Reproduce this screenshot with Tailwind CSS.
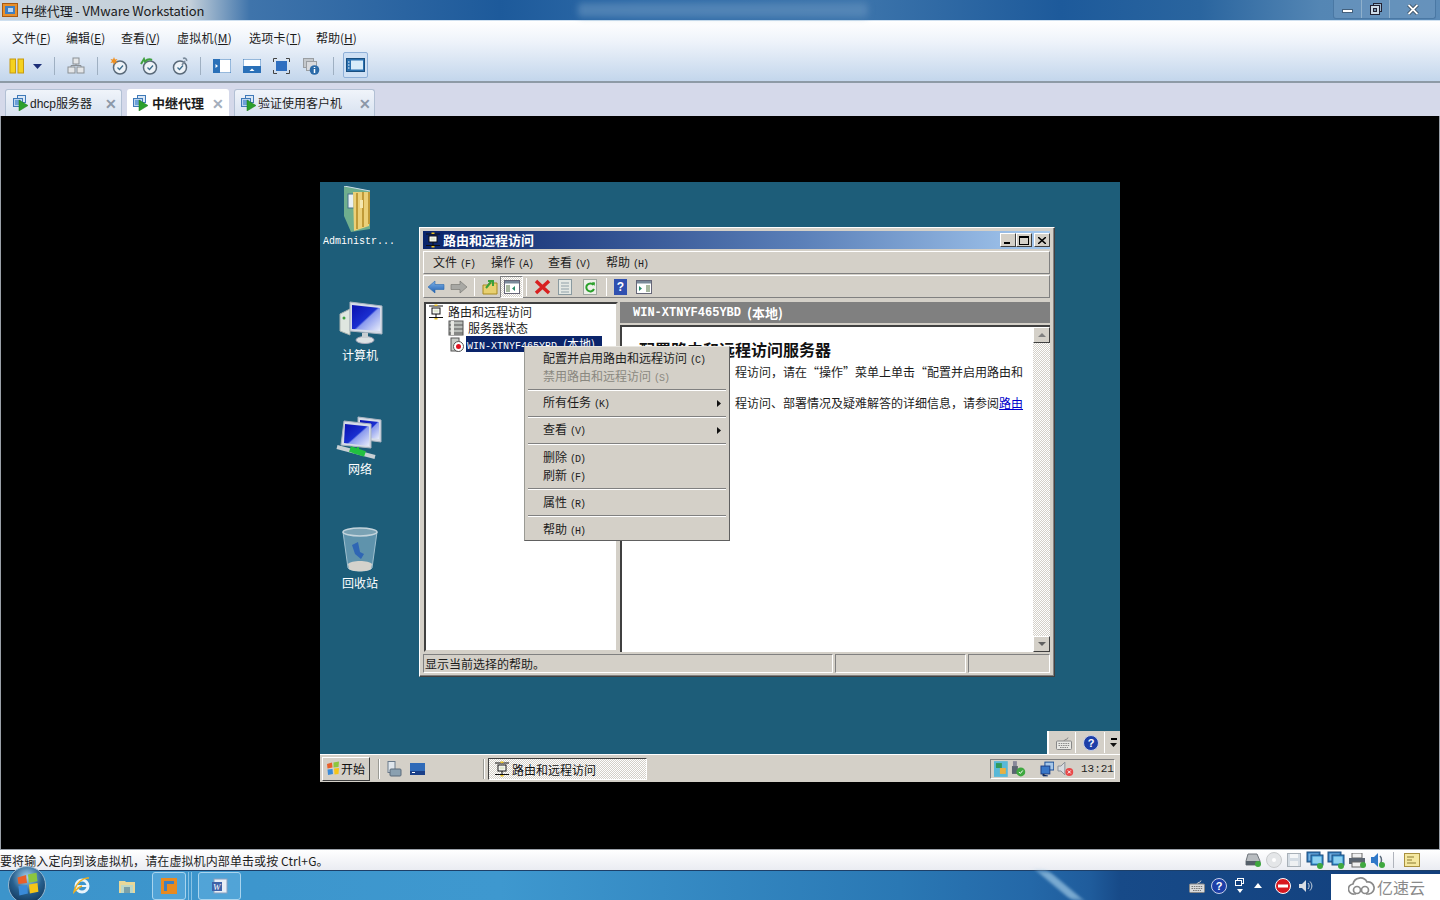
<!DOCTYPE html>
<html lang="zh"><head><meta charset="utf-8"><title>VMware Workstation</title>
<script src="https://cdn.jsdelivr.net/npm/@tailwindcss/browser@4"></script></head>
<body class="m-0 overflow-hidden bg-black">
<svg class="absolute w-0 h-0" aria-hidden="true"><defs>
<linearGradient id="scr" x1="0" y1="0" x2="1" y2="1"><stop offset="0" stop-color="#0a10b0"/><stop offset=".5" stop-color="#1a2fd0"/><stop offset=".55" stop-color="#8a9aee"/><stop offset="1" stop-color="#e8ecfa"/></linearGradient>
<linearGradient id="blu" x1="0" y1="0" x2="0" y2="1"><stop offset="0" stop-color="#7fb2e8"/><stop offset="1" stop-color="#1f5fb0"/></linearGradient>
<radialGradient id="orb" cx=".5" cy=".3" r=".8"><stop offset="0" stop-color="#a6d3ee"/><stop offset=".5" stop-color="#27608f"/><stop offset="1" stop-color="#0c2c4c"/></radialGradient>
<symbol id="tabvm" viewBox="0 0 16 16"><rect x="4.5" y=".5" width="8" height="7" fill="#dbe8f6" stroke="#3f79b8"/><rect x=".5" y="3.5" width="9" height="8" fill="#bcd5ee" stroke="#3f79b8"/><rect x="2" y="5" width="6" height="5" fill="#6ea1d8"/><path d="M6 5l9 5.5L6 16z" fill="#2ca02c" stroke="#1a7a1a" stroke-width=".5"/></symbol>
<symbol id="mmc" viewBox="0 0 16 16"><path d="M1 2h14M1 13.500h14" stroke="#111" stroke-width="1.200"/><rect x="4" y="4" width="8" height="6" fill="#fff" stroke="#111"/><rect x="5.500" y="5.500" width="5" height="3" fill="#dfe7d0"/><path d="M8 10v3" stroke="#111"/><path d="M6.500 0.500h3v1.500h-3zM6.500 14h3v1.500h-3z" fill="#e8c020"/></symbol>
<symbol id="clock" viewBox="0 0 18 18"><circle cx="10" cy="10.500" r="6.500" fill="#eef3f8" stroke="#5a6a7a" stroke-width="1.500"/><path d="M7.500 10.500l2 2 3.500-4" fill="none" stroke="#3f6f8f" stroke-width="1.300"/></symbol>
<symbol id="pc" viewBox="0 0 18 18"><rect x="1" y="1" width="13" height="10" fill="#2f78b8" stroke="#1f4f80"/><rect x="2.500" y="2.500" width="10" height="7" fill="#78b4e4"/><rect x="5" y="4" width="12" height="10" fill="#2f88c8" stroke="#1f4f80"/><rect x="6.500" y="5.500" width="9" height="7" fill="#8cd0f0"/><circle cx="14" cy="15" r="3" fill="#3fa83f"/></symbol>
<symbol id="ok" viewBox="0 0 6 6"><circle cx="3" cy="3" r="3" fill="#3fa83f"/></symbol>
</defs></svg>

<main class="w-[1440px] h-[900px] flex flex-col relative overflow-hidden font-['Noto_Sans_CJK_SC','Liberation_Sans',sans-serif] text-[12px] text-[#1c1c1c]">

<!-- title bar -->
<header class="h-[21px] shrink-0 flex items-center justify-between relative border-b border-[#cfe0f0] bg-[linear-gradient(90deg,#c9d4dc_0,#c4d0da_190px,#3f74ab_250px,#1d5a9b_500px,#2f6ba8_640px,#3c74ab_860px,#1d5a9b_1060px,#2a659f_1200px,#5486b4_1320px,#5c8bb7_1440px)]">
  <div class="flex items-center">
    <svg class="w-[16px] h-[16px] ml-[2px]" viewBox="0 0 16 16"><rect x=".5" y="1.500" width="15" height="13" fill="#e8902a" stroke="#a85a10"/><rect x="3" y="4" width="10" height="8" fill="#3f7fc0"/><rect x="6" y="6" width="5" height="4" fill="#bcd5ee"/></svg>
    <span class="ml-[3px] text-[13px] tracking-[-0.12px] leading-none text-[#1a1a1a] font-['Noto_Sans_CJK_SC','Noto_Sans',sans-serif]">中继代理 - VMware Workstation</span>
  </div>
  <div class="absolute left-[578px] top-[3px] w-[290px] h-[14px] rounded bg-[#5e8dbb]/70 blur-[3px]"></div>
  <div class="flex h-[19px] self-start mr-[4px] border border-t-0 border-[#4a78a4] rounded-b-[3px] bg-[#6b96be]/70">
    <div class="w-[28px] flex items-center justify-center border-r border-[#8fb0cc]"><div class="w-[11px] h-[4px] mt-[3px] bg-white border border-[#44607c]"></div></div>
    <div class="w-[28px] flex items-center justify-center border-r border-[#8fb0cc]"><svg class="w-[12px] h-[12px]" viewBox="0 0 12 12"><rect x="3.500" y=".5" width="8" height="8" fill="#9db8d0" stroke="#223"/><rect x=".5" y="2.500" width="9" height="9" fill="#cfdce8" stroke="#223"/><rect x="3.500" y="5.500" width="3" height="3" fill="#7c98b4" stroke="#223"/></svg></div>
    <div class="w-[45px] flex items-center justify-center"><svg class="w-[12px] h-[11px]" viewBox="0 0 12 11"><path d="M1.500 1l9 9M10.500 1l-9 9" stroke="#2c3e50" stroke-width="3.400"/><path d="M1.500 1l9 9M10.500 1l-9 9" stroke="#fff" stroke-width="1.800"/></svg></div>
  </div>
</header>

<!-- menu + toolbar -->
<section class="h-[62px] shrink-0 border-b-2 border-[#8d9aa6] bg-[linear-gradient(180deg,#ffffff_0%,#eef3fa_35%,#c3d6ec_100%)]">
  <nav class="h-[30px] pl-[12px] pt-[7px] flex leading-[20px] text-[12px]">
    <span class="w-[54px]">文件(<u>F</u>)</span><span class="w-[55px]">编辑(<u>E</u>)</span><span class="w-[56px]">查看(<u>V</u>)</span><span class="w-[72px] tracking-[0.2px]">虚拟机(<u>M</u>)</span><span class="w-[67px] tracking-[0.2px]">选项卡(<u>T</u>)</span><span>帮助(<u>H</u>)</span>
  </nav>
  <div class="h-[30px] flex items-center pl-[9px]">
    <svg class="w-[16px] h-[16px]" viewBox="0 0 16 16"><rect x="1" y="1" width="5.500" height="14" fill="#f5d21f" stroke="#c79a10"/><rect x="9" y="1" width="5.500" height="14" fill="#f5d21f" stroke="#c79a10"/></svg>
    <svg class="w-[9px] h-[5px] ml-[8px]" viewBox="0 0 9 5"><path d="M0 0h9L4.500 5z" fill="#1c2f78"/></svg>
    <div class="w-px h-[18px] bg-[#9fb0c2] ml-[12px]"></div>
    <svg class="w-[18px] h-[18px] ml-[12px]" viewBox="0 0 18 18"><g fill="#e4e6e8" stroke="#8a8f94"><rect x="6" y="1" width="6" height="6"/><rect x="1" y="10" width="7" height="6"/><rect x="10" y="10" width="7" height="6"/></g><path d="M9 7v2M4 10V8.500h10V10" fill="none" stroke="#8a8f94"/></svg>
    <div class="w-px h-[18px] bg-[#9fb0c2] ml-[12px]"></div>
    <div class="relative w-[18px] h-[18px] ml-[12px]"><svg class="w-[18px] h-[18px]" viewBox="0 0 18 18"><use href="#clock"/><path d="M4 0l1 2.500L7.500 2 6 4l1.500 2L5 5.500 4 8 3 5.500.5 6 2 4 .5 2 3 2.500z" fill="#f09020"/></svg></div>
    <svg class="w-[18px] h-[18px] ml-[12px]" viewBox="0 0 18 18"><use href="#clock"/><path d="M1 7l3-5 1 2.500C7 2.500 10 2 12 3" fill="none" stroke="#3fa03f" stroke-width="2"/></svg>
    <svg class="w-[18px] h-[18px] ml-[12px]" viewBox="0 0 18 18"><use href="#clock"/><path d="M12 8l3-4M13 1.500c2-1 4 .5 3.500 2.500" fill="none" stroke="#7a8a9a" stroke-width="1.600"/></svg>
    <div class="w-px h-[18px] bg-[#9fb0c2] ml-[12px]"></div>
    <svg class="w-[18px] h-[14px] ml-[12px]" viewBox="0 0 18 14"><rect width="18" height="14" fill="#fff" stroke="#2a70b8"/><rect width="7" height="14" fill="#2a70b8"/><path d="M2.500 5l2.500 2-2.500 2z" fill="#fff"/></svg>
    <svg class="w-[18px] h-[14px] ml-[12px]" viewBox="0 0 18 14"><rect width="18" height="14" fill="#fff" stroke="#2a70b8"/><rect y="7" width="18" height="7" fill="#2a70b8"/><path d="M6.500 12l2.500-2.500 2.500 2.500z" fill="#fff"/></svg>
    <svg class="w-[17px] h-[16px] ml-[12px]" viewBox="0 0 17 16"><rect x="3" y="3" width="11" height="10" fill="#2f6fc0"/><path d="M.5 4V.5H4M13 .5h3.500V4M.5 12v3.500H4M13 15.500h3.500V12" fill="none" stroke="#444"/></svg>
    <svg class="w-[17px] h-[17px] ml-[13px]" viewBox="0 0 17 17"><rect x=".5" y=".5" width="10" height="9" fill="#c4c8cc" stroke="#9a9ea2"/><rect x="3.500" y="3.500" width="10" height="9" fill="#d8dade" stroke="#9a9ea2"/><circle cx="11.500" cy="12" r="4.800" fill="#2a6aa8"/><path d="M11.500 9v1M11.500 11v4" stroke="#fff" stroke-width="1.500"/></svg>
    <div class="w-px h-[18px] bg-[#9fb0c2] ml-[13px]"></div>
    <div class="w-[25px] h-[26px] ml-[9px] -mt-[3px] flex items-center justify-center rounded-[2px] border border-[#8fb0d8] bg-[#cfe0f4]">
      <svg class="w-[19px] h-[14px]" viewBox="0 0 19 14"><rect x=".5" y=".5" width="18" height="13" fill="#2a70b0" stroke="#1a4f80"/><rect x="5" y="2.500" width="12" height="9" fill="#d8ecfa"/><path d="M2 4h1.500M2 7h1.500M2 10h1.500" stroke="#fff"/></svg>
    </div>
  </div>
</section>

<!-- tabs -->
<section class="h-[33px] shrink-0 bg-[#d5d9ea] flex items-end pl-[5px] gap-[5px]">
  <div class="w-[117px] h-[27px] flex items-center pl-[7px] rounded-t-[3px] border border-b-0 border-[#b2c0d4] bg-[linear-gradient(180deg,#f0f4fa,#d8e2f0)]">
    <svg class="w-[16px] h-[16px]"><use href="#tabvm"/></svg><span class="ml-[1px] text-[12px] w-[75px]"><span class="font-['Liberation_Sans',sans-serif]">dhcp</span>服务器</span><span class="text-[#8c98a8] text-[14px] font-bold leading-none">✕</span>
  </div>
  <div class="w-[102px] h-[27px] flex items-center pl-[6px] rounded-t-[3px] bg-white">
    <svg class="w-[16px] h-[16px]"><use href="#tabvm"/></svg><span class="ml-[3px] text-[13px] font-bold w-[60px]">中继代理</span><span class="text-[#a4aebc] text-[14px] font-bold leading-none">✕</span>
  </div>
  <div class="w-[141px] h-[27px] flex items-center pl-[6px] rounded-t-[3px] border border-b-0 border-[#b2c0d4] bg-[linear-gradient(180deg,#f0f4fa,#d8e2f0)]">
    <svg class="w-[16px] h-[16px]"><use href="#tabvm"/></svg><span class="ml-[1px] text-[12px] w-[101px]">验证使用客户机</span><span class="text-[#8c98a8] text-[14px] font-bold leading-none">✕</span>
  </div>
</section>

<!-- guest area -->
<section class="flex-1 bg-black flex justify-center pt-[66px] border-x border-[#9aa0a8]">
  <div class="relative w-[800px] h-[600px] bg-[#1d5d79] flex flex-col justify-end">

    <!-- desktop icons -->
    <div class="absolute left-[4px] top-[4px] w-[70px] flex flex-col items-center text-white">
      <svg class="w-[32px] h-[46px]" viewBox="0 0 32 46"><path d="M1 0l26 5v38L8 46 1 30z" fill="#6fae8e"/><path d="M1 0l26 5" stroke="#cfe0ea"/><rect x="5" y="8" width="6" height="14" fill="#e8f0f4" stroke="#44708a"/><path d="M10 6h16v34l-15 5z" fill="#ecd078"/><path d="M14 7v36M20 6v35M26 6v32" stroke="#c09a38" stroke-width="2"/><path d="M17 14h3v8h-3z" fill="#f5e8b0"/></svg>
      <span class="mt-[3px] font-['Liberation_Mono',monospace] text-[10px] leading-[14px]">Administr...</span>
    </div>
    <div class="absolute left-[10px] top-[118px] w-[60px] flex flex-col items-center text-white">
      <svg class="w-[46px] h-[46px]" viewBox="0 0 46 46"><path d="M3 14l10-5v26l-10-4z" fill="#dfe6e0" stroke="#aab4b0"/><circle cx="7" cy="18" r="1.500" fill="#3fa03f"/><path d="M13 2l32 4v28l-32-3z" fill="#d6dce8" stroke="#aab4c0"/><path d="M15 5l28 3v23l-28-2z" fill="url(#scr)"/><ellipse cx="28" cy="40" rx="9" ry="3.500" fill="#dde2e4" stroke="#aab"/><path d="M25 33h6v5h-6z" fill="#c8ced2"/></svg>
      <span class="text-[12px] leading-[16px] mt-[1px]">计算机</span>
    </div>
    <div class="absolute left-[10px] top-[234px] w-[60px] flex flex-col items-center text-white">
      <svg class="w-[48px] h-[44px]" viewBox="0 0 48 44"><path d="M22 1l23 3v22l-23-3z" fill="#d6dce8" stroke="#aab4c0"/><path d="M24 4l19 2v17l-19-2z" fill="url(#scr)"/><path d="M8 5l27 3v24L5 29z" fill="#d6dce8" stroke="#aab4c0"/><path d="M9 8l24 2.500v19.500L8 27z" fill="url(#scr)"/><path d="M1 31l38 10" stroke="#c8d0d4" stroke-width="4"/><path d="M14 33l15 5" stroke="#22c040" stroke-width="6"/><path d="M22 31v4l-4 2" stroke="#22c040" stroke-width="2" fill="none"/></svg>
      <span class="text-[12px] leading-[16px] mt-[1px]">网络</span>
    </div>
    <div class="absolute left-[10px] top-[345px] w-[60px] flex flex-col items-center text-white">
      <svg class="w-[40px] h-[46px]" viewBox="0 0 40 46"><path d="M3 5l5 36c3 4 21 4 24 0l5-36z" fill="#5f93ac" stroke="#9fc0cf"/><ellipse cx="20" cy="5" rx="17" ry="4" fill="#7aa2b4" stroke="#c4d4dc" stroke-width="1.500"/><path d="M12 18l6-3 2 10 4 2-3 5-6-5z" fill="#2f66b4"/><path d="M8 37c3-4 21-4 24 0l-1 5c-3 3-19 3-22 0z" fill="#d4d2cc"/></svg>
      <span class="text-[12px] leading-[16px] mt-[2px]">回收站</span>
    </div>

    <!-- RRAS window -->
    <div class="absolute left-[99px] top-[45px] w-[636px] h-[450px] bg-[#d4d0c8] border border-[#404040] border-t-white border-l-white pt-[3px] pl-[3px] pb-[3px] pr-[4px] flex flex-col shadow-[inset_-1px_-1px_0_#808080]">
      <div class="h-[18px] shrink-0 flex items-center bg-[linear-gradient(90deg,#0a246a,#5a7fb8_60%,#a6caf0)] text-white">
        <svg class="w-[16px] h-[16px] ml-[2px]"><use href="#mmc"/></svg>
        <span class="ml-[2px] -mt-[2px] font-bold text-[13px] leading-none">路由和远程访问</span>
        <div class="ml-auto flex gap-0 text-black">
          <div class="w-[16px] h-[14px] bg-[#d4d0c8] border border-t-white border-l-white border-r-[#404040] border-b-[#404040] flex items-end justify-start pl-[3px] pb-[2px]"><div class="w-[6px] h-[2px] bg-black"></div></div>
          <div class="w-[16px] h-[14px] bg-[#d4d0c8] border border-t-white border-l-white border-r-[#404040] border-b-[#404040] flex items-center justify-center"><div class="w-[10px] h-[9px] border border-black border-t-2"></div></div>
          <div class="w-[16px] h-[14px] ml-[2px] bg-[#d4d0c8] border border-t-white border-l-white border-r-[#404040] border-b-[#404040] flex items-center justify-center"><svg class="w-[8px] h-[7px]" viewBox="0 0 8 7"><path d="M0 0l8 7M8 0L0 7" stroke="#000" stroke-width="1.500"/></svg></div>
        </div>
      </div>
      <div class="h-[23px] mt-[2px] shrink-0 flex items-center border border-t-white border-l-white border-r-[#808080] border-b-[#808080] pl-[9px]">
        <span class="w-[58px]">文件<span class="font-['Liberation_Mono',monospace] text-[10px] ml-[3px] tracking-[-1px]">(F)</span></span><span class="w-[57px]">操作<span class="font-['Liberation_Mono',monospace] text-[10px] ml-[3px] tracking-[-1px]">(A)</span></span><span class="w-[58px]">查看<span class="font-['Liberation_Mono',monospace] text-[10px] ml-[3px] tracking-[-1px]">(V)</span></span><span>帮助<span class="font-['Liberation_Mono',monospace] text-[10px] ml-[3px] tracking-[-1px]">(H)</span></span>
      </div>
      <div class="h-[23px] mt-px shrink-0 flex items-center border border-t-white border-l-white border-r-[#808080] border-b-[#808080] pl-[3px]">
        <svg class="w-[18px] h-[14px]" viewBox="0 0 18 14"><path d="M1 7l7-6v3.500h9v5H8V13z" fill="url(#blu)" stroke="#2a6ab0" stroke-width=".6"/></svg>
        <svg class="w-[18px] h-[14px] ml-[5px]" viewBox="0 0 18 14"><path d="M17 7l-7-6v3.500H1v5h9V13z" fill="#a8a8a4" stroke="#70706c" stroke-width=".6"/></svg>
        <div class="w-px h-[18px] bg-[#808080] border-r border-white ml-[6px]"></div>
        <svg class="w-[16px] h-[16px] ml-[7px]" viewBox="0 0 16 16"><path d="M1 6h5l1-2h8v11H1z" fill="#e8d070" stroke="#a88a20"/><path d="M4 9l5-6M6 2h5v5" fill="none" stroke="#3aa03a" stroke-width="2"/></svg>
        <div class="w-[23px] h-[22px] ml-[2px] flex items-center justify-center border border-t-[#808080] border-l-[#808080] border-r-white border-b-white bg-[repeating-conic-gradient(#d4d0c8_0_25%,#ffffff_0_50%)] bg-[length:2px_2px]"><svg class="w-[16px] h-[14px]" viewBox="0 0 16 14"><rect x=".5" y=".5" width="15" height="13" fill="#fff" stroke="#667"/><rect x="1" y="1" width="14" height="2.500" fill="#7a8a9a"/><rect x="2" y="5" width="4" height="7" fill="#a8b8a0"/><path d="M11 6l-3 2.500 3 2.500z" fill="#2a8a6a"/></svg></div>
        <div class="w-px h-[18px] bg-[#808080] border-r border-white ml-[3px]"></div>
        <svg class="w-[17px] h-[16px] ml-[7px]" viewBox="0 0 17 16"><path d="M2 2l13 12M15 2L2 14" stroke="#d82020" stroke-width="3.500"/></svg>
        <svg class="w-[14px] h-[16px] ml-[7px]" viewBox="0 0 14 16"><rect x=".5" y=".5" width="13" height="15" fill="#e4e8e4" stroke="#8a9aa0"/><path d="M3 4h8M3 7h8M3 10h8M3 13h8" stroke="#90a0a8"/></svg>
        <svg class="w-[14px] h-[16px] ml-[11px]" viewBox="0 0 14 16"><rect x=".5" y=".5" width="13" height="15" fill="#eef0ea" stroke="#a0a8a0"/><path d="M10.500 6A4 4 0 1 0 11 10" fill="none" stroke="#2aa02a" stroke-width="2"/><path d="M9 3l3 .5-.5 3.500z" fill="#2aa02a"/></svg>
        <div class="w-px h-[18px] bg-[#808080] border-r border-white ml-[9px]"></div>
        <div class="w-[13px] h-[16px] ml-[7px] flex items-center justify-center bg-[#3050b0] text-white font-bold text-[12px] leading-none font-['Liberation_Sans',sans-serif]">?</div>
        <svg class="w-[16px] h-[14px] ml-[9px]" viewBox="0 0 16 14"><rect x=".5" y=".5" width="15" height="13" fill="#fff" stroke="#667"/><rect x="1" y="1" width="14" height="2.500" fill="#7a8a9a"/><path d="M3 6l3 2.500L3 11z" fill="#2a8a6a"/><rect x="10" y="5" width="4" height="7" fill="#a8b8a0"/></svg>
      </div>
      <div class="flex-1 mt-[4px] flex min-h-0">
        <div class="w-[194px] ml-px shrink-0 bg-white border-2 border-t-[#404040] border-l-[#404040] border-r-[#d4d0c8] border-b-[#d4d0c8] pl-[2px]">
          <div class="flex items-center h-[16px]"><svg class="w-[16px] h-[16px]"><use href="#mmc"/></svg><span class="ml-[4px]">路由和远程访问</span></div>
          <div class="flex items-center h-[16px] pl-[20px]"><svg class="w-[16px] h-[16px]" viewBox="0 0 16 16"><rect x="1" y="1" width="14" height="14" fill="#b8bcb8" stroke="#555"/><path d="M1 5h14M1 9h14M1 13h14" stroke="#555"/><rect x="3" y="1" width="3" height="14" fill="#e8e8e4"/></svg><span class="ml-[4px]">服务器状态</span></div>
          <div class="flex items-center h-[16px] pl-[22px]"><svg class="w-[14px] h-[15px]" viewBox="0 0 14 15"><rect x="1" y="1" width="8" height="13" fill="#c8ccc8" stroke="#555"/><circle cx="8.500" cy="9.500" r="5" fill="#fff" stroke="#555"/><circle cx="8.500" cy="9.500" r="2.500" fill="#e01020"/></svg><span class="ml-[2px] px-px bg-[#0a246a] text-white h-[16px] w-[136px] whitespace-nowrap leading-[16px]"><span class="font-['Liberation_Mono',monospace] text-[10px] mr-[6px]">WIN-XTNYF465YBD</span>(本地)</span></div>
        </div>
        <div class="w-[2px] shrink-0"></div>
        <div class="flex-1 flex flex-col min-w-0">
          <div class="h-[21px] shrink-0 bg-[#808080] text-white font-bold flex items-center pl-[13px] pt-px text-[12px]"><span class="font-['Liberation_Mono',monospace] mr-[6px]">WIN-XTNYF465YBD</span><span class="text-[13px]">(本地)</span></div>
          <div class="h-[2px] shrink-0"></div>
          <div class="flex-1 flex bg-white border-t-2 border-l-2 border-[#404040] min-h-0">
            <div class="flex-1 pt-[11px] min-w-0">
              <h1 class="pl-[17px] text-[16px] leading-[22px] font-bold text-[#111]">配置路由和远程访问服务器</h1>
              <p class="ml-[113px] leading-[20px] mt-[2px] whitespace-nowrap">程访问，请在“操作”菜单上单击“配置并启用路由和</p>
              <p class="ml-[113px] leading-[20px] mt-[11px] whitespace-nowrap">程访问、部署情况及疑难解答的详细信息，请参阅<a class="text-[#0000cc] underline">路由</a></p>
            </div>
            <div class="w-[17px] shrink-0 flex flex-col justify-between bg-[repeating-conic-gradient(#d4d0c8_0_25%,#ffffff_0_50%)] bg-[length:2px_2px]">
              <div class="h-[16px] bg-[#d4d0c8] border border-t-white border-l-white border-r-[#404040] border-b-[#404040] flex items-center justify-center"><svg class="w-[8px] h-[4px]" viewBox="0 0 8 4"><path d="M0 4h8L4 0z" fill="#808080"/></svg></div>
              <div class="h-[16px] bg-[#d4d0c8] border border-t-white border-l-white border-r-[#404040] border-b-[#404040] flex items-center justify-center"><svg class="w-[8px] h-[4px]" viewBox="0 0 8 4"><path d="M0 0h8L4 4z" fill="#606060"/></svg></div>
            </div>
          </div>
        </div>
      </div>
      <footer class="h-[19px] mt-[2px] shrink-0 flex gap-[2px]">
        <div class="w-[410px] border border-t-[#808080] border-l-[#808080] border-r-white border-b-white leading-[17px] pl-px">显示当前选择的帮助。</div>
        <div class="w-[131px] border border-t-[#808080] border-l-[#808080] border-r-white border-b-white"></div>
        <div class="flex-1 border border-t-[#808080] border-l-[#808080] border-r-white border-b-white"></div>
      </footer>
    </div>

    <!-- context menu -->
    <div class="absolute left-[204px] top-[164px] w-[206px] h-[195px] z-10 bg-[#d4d0c8] border border-[#606060] border-t-[#e8e6e0] border-l-[#9a9a94] py-[2px] pl-[18px] pr-[3px] text-[12px]">
      <div class="h-[18px] leading-[18px]">配置并启用路由和远程访问<span class="font-['Liberation_Mono',monospace] text-[10px] ml-[3px] tracking-[-1px]">(C)</span></div>
      <div class="h-[18px] leading-[18px] text-[#8a8880]">禁用路由和远程访问<span class="font-['Liberation_Mono',monospace] text-[10px] ml-[3px] tracking-[-1px]">(S)</span></div>
      <div class="h-[9px] -ml-[15px] flex items-center"><div class="w-full border-t border-b border-t-[#808080] border-b-white"></div></div>
      <div class="h-[18px] leading-[18px] flex justify-between items-center"><span>所有任务<span class="font-['Liberation_Mono',monospace] text-[10px] ml-[3px] tracking-[-1px]">(K)</span></span><svg class="w-[4px] h-[7px] mr-[5px]" viewBox="0 0 4 7"><path d="M0 0l4 3.500L0 7z" fill="#111"/></svg></div>
      <div class="h-[9px] -ml-[15px] flex items-center"><div class="w-full border-t border-b border-t-[#808080] border-b-white"></div></div>
      <div class="h-[18px] leading-[18px] flex justify-between items-center"><span>查看<span class="font-['Liberation_Mono',monospace] text-[10px] ml-[3px] tracking-[-1px]">(V)</span></span><svg class="w-[4px] h-[7px] mr-[5px]" viewBox="0 0 4 7"><path d="M0 0l4 3.500L0 7z" fill="#111"/></svg></div>
      <div class="h-[9px] -ml-[15px] flex items-center"><div class="w-full border-t border-b border-t-[#808080] border-b-white"></div></div>
      <div class="h-[18px] leading-[18px]">删除<span class="font-['Liberation_Mono',monospace] text-[10px] ml-[3px] tracking-[-1px]">(D)</span></div>
      <div class="h-[18px] leading-[18px]">刷新<span class="font-['Liberation_Mono',monospace] text-[10px] ml-[3px] tracking-[-1px]">(F)</span></div>
      <div class="h-[9px] -ml-[15px] flex items-center"><div class="w-full border-t border-b border-t-[#808080] border-b-white"></div></div>
      <div class="h-[18px] leading-[18px]">属性<span class="font-['Liberation_Mono',monospace] text-[10px] ml-[3px] tracking-[-1px]">(R)</span></div>
      <div class="h-[9px] -ml-[15px] flex items-center"><div class="w-full border-t border-b border-t-[#808080] border-b-white"></div></div>
      <div class="h-[18px] leading-[18px]">帮助<span class="font-['Liberation_Mono',monospace] text-[10px] ml-[3px] tracking-[-1px]">(H)</span></div>
    </div>

    <!-- language bar -->
    <div class="absolute right-0 bottom-[28px] w-[73px] h-[23px] bg-[#d4d0c8] flex items-center border-l-2 border-white">
      <svg class="w-[16px] h-[14px] ml-[7px]" viewBox="0 0 16 14"><path d="M8 5c0-2 4-1 4-3.500" fill="none" stroke="#888"/><rect x=".5" y="5" width="15" height="8.500" rx="1" fill="#e8e8e4" stroke="#888"/><path d="M2.500 7.500h11M2.500 9.500h11M4 11.500h8" stroke="#888" stroke-dasharray="1.500 .8"/></svg>
      <div class="w-px h-[21px] bg-white ml-[3px]"></div>
      <div class="w-[16px] h-[16px] ml-[7px] rounded-full bg-[#1d3fa8] border border-[#c8d0e8] text-white font-bold text-[11px] leading-[14px] text-center font-['Liberation_Sans',sans-serif]">?</div>
      <div class="w-px h-[21px] bg-white ml-[5px]"></div>
      <div class="ml-[5px] flex flex-col items-center gap-[3px]"><div class="w-[6px] h-[2px] bg-black"></div><svg class="w-[7px] h-[4px]" viewBox="0 0 7 4"><path d="M0 0h7L3.500 4z" fill="#111"/></svg></div>
    </div>

    <!-- guest taskbar -->
    <div class="h-[28px] shrink-0 bg-[#d4d0c8] border-t border-white flex items-center pl-[2px]">
      <div class="w-[48px] h-[24px] flex items-center pl-[3px] border border-t-white border-l-white border-r-[#404040] border-b-[#404040]">
        <svg class="w-[15px] h-[15px]" viewBox="0 0 15 15"><path d="M1 3l5-1.500.5 5L1.500 7.500z" fill="#e8602a"/><path d="M7.500 1.500L13 0.500 12.500 6l-5 .5z" fill="#8cc63f"/><path d="M1.500 8.500l5-.5.5 5L2 14z" fill="#3a8ad8"/><path d="M8 7.500l5-.5-.5 6-4 .5z" fill="#f5c518"/></svg>
        <span class="text-[#111]">开始</span>
      </div>
      <div class="w-[2px] h-[20px] ml-[8px] bg-[#9a9a94] border-r border-white"></div>
      <svg class="w-[15px] h-[16px] ml-[7px]" viewBox="0 0 15 16"><rect x="1" y="0.500" width="7" height="11" fill="#dfe6ec" stroke="#6a7a8a"/><rect x="3" y="8" width="11" height="7" rx="1" fill="#8aa0b0" stroke="#5a6a7a"/></svg>
      <svg class="w-[15px] h-[12px] ml-[8px]" viewBox="0 0 15 12"><rect width="15" height="12" fill="#2f6ab8"/><rect x="0" y="8" width="15" height="4" fill="#1a3f88"/><rect x="2" y="9" width="3" height="1" fill="#fff"/></svg>
      <div class="w-[2px] h-[20px] ml-[58px] bg-[#9a9a94] border-r border-white"></div>
      <div class="w-[159px] h-[22px] ml-[3px] flex items-center pl-[5px] border border-t-[#404040] border-l-[#404040] border-r-white border-b-white bg-[repeating-conic-gradient(#d4d0c8_0_25%,#ffffff_0_50%)] bg-[length:2px_2px]">
        <svg class="w-[16px] h-[16px]"><use href="#mmc"/></svg><span class="ml-[2px] mt-[2px] text-[#111]">路由和远程访问</span>
      </div>
      <div class="ml-auto mr-[5px] w-[125px] h-[20px] flex items-center pl-[3px] border border-t-[#808080] border-l-[#808080] border-r-white border-b-white">
        <svg class="w-[14px] h-[16px]" viewBox="0 0 14 16"><rect width="14" height="16" fill="#58b8d8"/><rect x="2" y="2" width="6" height="5" fill="#2f9a5a"/><rect x="6" y="7" width="6" height="6" fill="#e8b040"/></svg>
        <svg class="w-[16px] h-[16px] ml-[2px]" viewBox="0 0 16 16"><rect x="3" y="0" width="4" height="5" fill="#889"/><path d="M2 5h6v8H2z" fill="#5a6470"/><circle cx="11" cy="11" r="4.500" fill="#3fa83f"/><path d="M9 11l1.500 1.500 2.500-3" stroke="#fff" fill="none"/></svg>
        <svg class="w-[15px] h-[16px] ml-[14px]" viewBox="0 0 15 16"><rect x="5" y="1" width="9" height="8" fill="#a8c8e8" stroke="#1a4f98"/><rect x="1" y="5" width="9" height="8" fill="#3a78c8" stroke="#1a3f88"/><path d="M3 13v2h5" stroke="#1a3f88"/></svg>
        <svg class="w-[17px] h-[16px] ml-[3px]" viewBox="0 0 17 16"><path d="M1 5h3l4-4v13l-4-4H1z" fill="#d8dce0" stroke="#8a9098"/><circle cx="12.500" cy="11" r="4" fill="#e84848"/><path d="M11 9.500l3 3M14 9.500l-3 3" stroke="#fff"/></svg>
        <span class="ml-[7px] mt-[2px] font-['Liberation_Mono',monospace] text-[11px] text-[#222]">13:21</span>
      </div>
    </div>
  </div>
</section>

<!-- VMware status bar -->
<section class="h-[21px] shrink-0 flex items-center bg-[linear-gradient(180deg,#ffffff,#eaecf2)] border-t border-[#9aa0a8]">
  <span class="pt-[2px] text-[12px] tracking-[0.1px] leading-none whitespace-nowrap">要将输入定向到该虚拟机，请在虚拟机内部单击或按 Ctrl+G。</span>
  <div class="ml-auto flex items-center pr-[20px]">
    <svg class="w-[16px] h-[14px]" viewBox="0 0 16 14"><path d="M3 1h9l3 7v4H1V8z" fill="#b8bcc0" stroke="#70767c"/><rect x="1" y="8" width="14" height="4" fill="#55606a"/><use href="#ok" x="10" y="8" width="6" height="6"/></svg>
    <svg class="w-[16px] h-[16px] ml-[5px]" viewBox="0 0 16 16"><circle cx="8" cy="8" r="7.500" fill="#e4e6e8" stroke="#c8cacc"/><circle cx="8" cy="8" r="2" fill="#fff"/></svg>
    <svg class="w-[14px] h-[14px] ml-[5px]" viewBox="0 0 14 14"><rect x=".5" y=".5" width="13" height="13" fill="#d4dce4" stroke="#a8b0b8"/><rect x="3" y="1" width="8" height="4" fill="#f4f6f8"/><rect x="3" y="8" width="8" height="5" fill="#eef0f2"/></svg>
    <svg class="w-[18px] h-[18px] ml-[5px]"><use href="#pc"/></svg>
    <svg class="w-[18px] h-[18px] ml-[3px]"><use href="#pc"/></svg>
    <svg class="w-[17px] h-[15px] ml-[4px]" viewBox="0 0 17 15"><rect x="3" y="0" width="10" height="5" fill="#f0f0f0" stroke="#666"/><rect x="0" y="5" width="16" height="6" fill="#5a6470"/><rect x="3" y="9" width="10" height="5" fill="#f0f0f0" stroke="#666"/><use href="#ok" x="11" y="9" width="6" height="6"/></svg>
    <svg class="w-[16px] h-[18px] ml-[3px]" viewBox="0 0 16 18"><path d="M2 6h3l4-4v14l-4-4H2z" fill="#2f78c8"/><path d="M11 5c2 2 2 6 0 8" stroke="#5a6a7a" fill="none" stroke-width="1.500"/><use href="#ok" x="10" y="11" width="6" height="6"/></svg>
    <div class="w-px h-[16px] bg-[#b0b4bc] ml-[8px]"></div>
    <svg class="w-[16px] h-[14px] ml-[10px]" viewBox="0 0 16 14"><rect x=".5" y=".5" width="15" height="13" fill="#f5e8a0" stroke="#a89040"/><path d="M3 4h7M3 7h5M3 10h9" stroke="#8a7a30"/></svg>
  </div>
</section>

<!-- Windows taskbar -->
<footer class="h-[30px] shrink-0 relative flex items-center bg-[linear-gradient(90deg,#3c94cb_0,#3e98cf_500px,#2a78b4_900px,#2468a8_1030px,#1f5c9c_1090px,#174a88_1120px,#123f7c_1440px)] border-t border-[#1d3f68]">
  <div class="absolute left-[1054px] top-0 w-[12px] h-full skew-x-[50deg] bg-[#9cc8e4]/70 blur-[2px]"></div>
  <svg class="absolute left-[8px] -top-[5px] w-[38px] h-[38px] z-10" viewBox="0 0 40 40"><circle cx="20" cy="20" r="19.500" fill="url(#orb)" stroke="#9ab8d0"/><path d="M10 12l9-2.500 1 8.500-9 1z" fill="#e8602a"/><path d="M21 9l9-2 1 9-9 1.500z" fill="#8cc63f"/><path d="M11 21l9-1 1 9-9 2z" fill="#3a8ad8"/><path d="M22 19.500l9-1.500 1 9-9 2z" fill="#f5c518"/></svg>
  <svg class="ml-[73px] w-[18px] h-[18px]" viewBox="0 0 18 18"><circle cx="9" cy="9" r="6" fill="none" stroke="#e8f4fc" stroke-width="3"/><path d="M4 9h10" stroke="#e8f4fc" stroke-width="2"/><path d="M16 1C10 0 3 6 1 15c3-3 5-5 8-6" fill="none" stroke="#f0b020" stroke-width="1.500"/></svg>
  <svg class="ml-[27px] w-[18px] h-[18px]" viewBox="0 0 18 18"><path d="M1 4h6l1 1h9v11H1z" fill="#e8d898"/><path d="M3 8h12v8H3z" fill="#bcd8c8"/><rect x="6" y="10" width="6" height="6" fill="#7aa0a8"/></svg>
  <div class="ml-[16px] w-[34px] h-[28px] flex items-center justify-center rounded-[3px] border border-[#a8d4ee] bg-[#5aaadc]/70">
    <svg class="w-[16px] h-[16px]" viewBox="0 0 16 16"><rect width="16" height="16" fill="#e88a20"/><rect x="3" y="3" width="10" height="10" fill="#3f7fc0"/><rect x="6" y="6" width="7" height="7" fill="#e88a20"/></svg>
  </div>
  <div class="ml-[2px] w-px h-[28px] bg-[#a8d4ee]/70"></div>
  <div class="ml-[2px] w-px h-[28px] bg-[#a8d4ee]/70"></div>
  <div class="ml-[6px] w-[43px] h-[28px] flex items-center justify-center rounded-[3px] border border-[#a8d4ee] bg-[#5aaadc]/70">
    <svg class="w-[16px] h-[16px]" viewBox="0 0 16 16"><rect x="2" y="1" width="13" height="14" fill="#e8eef6" stroke="#8aa0c0"/><rect x="0" y="4" width="10" height="9" fill="#3f62a8"/><text x="1" y="12" font-size="9" font-family="Liberation Serif" font-style="italic" fill="#fff">W</text></svg>
  </div>
  <div class="ml-auto flex items-center h-full">
    <svg class="w-[16px] h-[14px]" viewBox="0 0 16 14"><path d="M8 5c0-2 4-1 4-3.500" fill="none" stroke="#c8ccd0"/><rect x=".5" y="5" width="15" height="8.500" rx="1" fill="#d8dadc" stroke="#888"/><path d="M2.500 7.500h11M2.500 9.500h11M4 11.500h8" stroke="#777" stroke-dasharray="1.500 .8"/></svg>
    <div class="w-[16px] h-[16px] ml-[6px] rounded-full bg-[#1d3fa8] border border-[#c8d0e8] text-white font-bold text-[11px] leading-[14px] text-center font-['Liberation_Sans',sans-serif]">?</div>
    <div class="ml-[8px] flex flex-col items-center gap-[3px]"><svg class="w-[9px] h-[8px]" viewBox="0 0 9 8"><rect x="2.500" y=".5" width="6" height="5" fill="none" stroke="#fff"/><rect x=".5" y="2.500" width="6" height="5" fill="#123f7c" stroke="#fff"/></svg><svg class="w-[6px] h-[4px]" viewBox="0 0 6 4"><path d="M0 0h6L3 4z" fill="#fff"/></svg></div>
    <svg class="w-[8px] h-[5px] ml-[10px]" viewBox="0 0 8 5"><path d="M0 5h8L4 0z" fill="#fff"/></svg>
    <svg class="w-[16px] h-[16px] ml-[13px]" viewBox="0 0 16 16"><circle cx="8" cy="8" r="7.500" fill="#d81820" stroke="#fff"/><rect x="3" y="6.500" width="10" height="3" fill="#fff"/></svg>
    <svg class="w-[15px] h-[14px] ml-[8px] mr-[17px]" viewBox="0 0 15 14"><path d="M0 5h3l4-4v12L3 9H0z" fill="#d8dde4"/><path d="M9 4c1.500 2 1.500 4 0 6M11 2.500c2.500 3 2.500 6 0 9" fill="none" stroke="#c8d4e0"/></svg>
    <div class="w-[109px] h-[27px] mt-[3px] bg-white flex items-center pl-[17px]">
      <svg class="w-[27px] h-[20px]" viewBox="0 0 27 20"><path d="M8 17H6a5 5 0 0 1-1-10 7.500 7.500 0 0 1 14-2 6 6 0 0 1 2 12h-3" fill="none" stroke="#8a8a8a" stroke-width="1.700"/><circle cx="9" cy="13" r="3.500" fill="none" stroke="#8a8a8a" stroke-width="1.700"/><circle cx="17" cy="13" r="3.500" fill="none" stroke="#8a8a8a" stroke-width="1.700"/></svg>
      <span class="ml-[2px] text-[16px] leading-none text-[#8a8a8a]">亿速云</span>
    </div>
  </div>
</footer>
</main>
</body></html>
